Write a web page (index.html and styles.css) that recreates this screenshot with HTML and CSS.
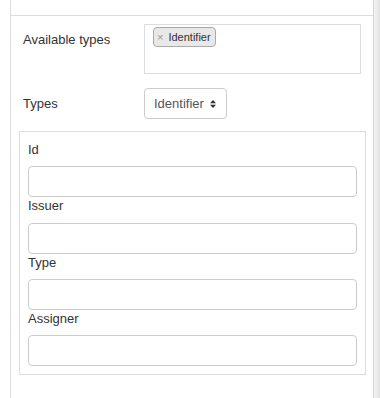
FILE: index.html
```html
<!DOCTYPE html>
<html>
<head>
    <meta charset="utf-8">
    <title>Types</title>
    <link rel="stylesheet" href="styles.css">
</head>
<body>
    <div class="page">
        <div class="panel">
            <div class="panel_head"></div>
            <div class="panel_body">
                <div class="row">
                    <label class="row_label top">Available types</label>
                    <div class="multi">
                        <span class="tag"><span class="tag_x">&times;</span>Identifier</span>
                    </div>
                </div>
                <div class="row middle">
                    <label class="row_label">Types</label>
                    <div class="select">
                        <span>Identifier</span>
                        <svg class="caret" width="6" height="8" viewBox="0 0 6 8">
                            <path d="M0 3.3 L3 0 L6 3.3 Z M0 4.7 L3 8 L6 4.7 Z" fill="#333"/>
                        </svg>
                    </div>
                </div>
                <div class="fields">
                    <label class="field_label">Id</label>
                    <div class="input"></div>
                    <label class="field_label">Issuer</label>
                    <div class="input"></div>
                    <label class="field_label">Type</label>
                    <div class="input"></div>
                    <label class="field_label">Assigner</label>
                    <div class="input"></div>
                </div>
            </div>
        </div>
        <div class="scroll"></div>
    </div>
</body>
</html>
```

FILE: styles.css
```css
html, body {
    margin: 0;
    padding: 0;
    background: #fff;
}
body {
    font-family: "Liberation Sans", Arial, sans-serif;
    font-size: 13px;
    color: #333;
}
.page {
    display: flex;
    height: 398px;
    overflow: hidden;
}
.panel {
    margin-left: 10px;
    width: 362px;
    border-left: 1px solid #ddd;
    border-right: 1px solid #d4d4d4;
}
.scroll {
    width: 6px;
    background: linear-gradient(to right, #f4f4f4, #e2e2e2);
}
.panel_head {
    height: 15px;
    border-bottom: 1px solid #ddd;
}
.panel_body {
    padding-top: 8px;
}
.row {
    display: flex;
    padding: 0 12px;
}
.row.middle {
    margin-top: 14px;
    height: 31px;
    align-items: center;
}
.row_label {
    width: 121px;
    line-height: 18px;
}
.row_label.top {
    padding-top: 7px;
}
.multi {
    box-sizing: border-box;
    width: 217px;
    height: 50px;
    border: 1px solid #ddd;
    padding: 2px 8px;
}
.tag {
    display: inline-block;
    box-sizing: border-box;
    height: 20px;
    line-height: 18px;
    padding: 0 4px 0 3px;
    font-size: 11px;
    background: #e8e8e8;
    border: 1px solid #aaa;
    border-radius: 4px;
    color: #333;
}
.tag_x {
    color: #999;
    margin-right: 5px;
}
.select {
    box-sizing: border-box;
    height: 31px;
    width: 83px;
    border: 1px solid #ccc;
    border-radius: 4px;
    padding: 0 0 0 9px;
    display: flex;
    align-items: center;
    color: #555;
}
.caret {
    margin-left: 6px;
}
.fields {
    margin: 12px 7px 0 8px;
    border: 1px solid #ddd;
    padding: 9px 8px 8px 8px;
    display: flex;
    flex-direction: column;
}
.field_label {
    line-height: 18.33px;
    margin-bottom: 7px;
}
.input {
    box-sizing: border-box;
    height: 31px;
    border: 1px solid #ccc;
    border-radius: 4px;
}
```
